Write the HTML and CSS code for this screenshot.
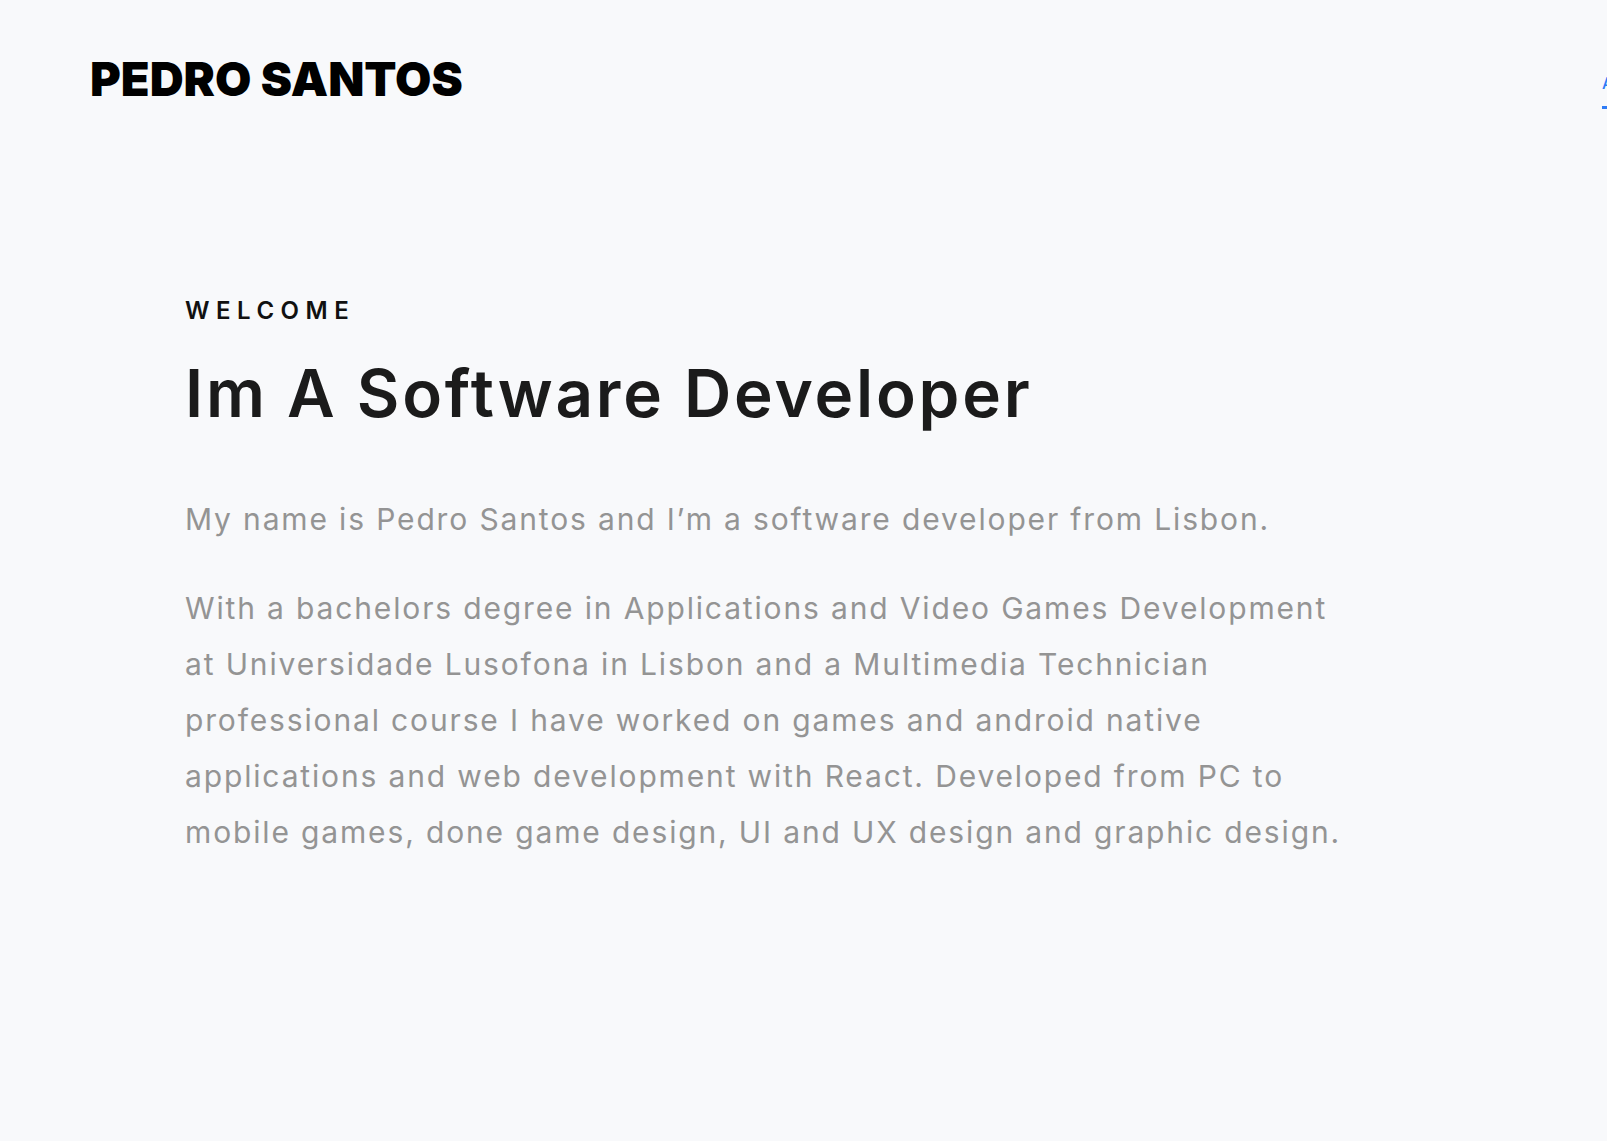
FILE: index.html
```html
<!DOCTYPE html>
<html lang="en">
<head>
<meta charset="utf-8">
<title>Pedro Santos</title>
<link rel="stylesheet" href="styles.css">
</head>
<body>
<header class="site-header">
  <a class="logo" href="#">PEDRO SANTOS</a>
  <nav class="nav">
    <a class="nav-link active" href="#">About</a>
    <a class="nav-link" href="#">Projects</a>
    <a class="nav-link" href="#">Contact</a>
  </nav>
</header>
<main class="hero">
  <p class="eyebrow">Welcome</p>
  <h1 class="title">Im A Software Developer</h1>
  <p class="lead">My name is Pedro Santos and I’m a software developer from Lisbon.</p>
  <p class="lead body">With a bachelors degree in Applications and Video Games Development at Universidade Lusofona in Lisbon and a Multimedia Technician professional course I have worked on games and android native applications and web development with React. Developed from PC to mobile games, done game design, UI and UX design and graphic design.</p>
</main>
</body>
</html>
```

FILE: styles.css
```css
html {
  overflow-x: hidden;
}
body {
  margin: 0;
  background: #f8f9fb;
  font-family: Inter, "Noto Sans", sans-serif;
  overflow-x: hidden;
}
.site-header {
  display: flex;
  align-items: flex-start;
  padding: 51px 0 0 90px;
  width: max-content;
}
.logo {
  flex: 0 0 1512px;
  font-size: 47px;
  line-height: 56px;
  font-weight: 900;
  color: #000;
  text-decoration: none;
  letter-spacing: 0;
}
.nav {
  display: flex;
  gap: 40px;
  padding-top: 20px;
}
.nav-link {
  font-size: 16px;
  line-height: 24px;
  font-weight: 500;
  color: #333;
  text-decoration: none;
  padding-bottom: 11px;
  border-bottom: 3px solid transparent;
}
.nav-link.active {
  color: #2f7cf6;
  border-bottom-color: #2f7cf6;
}
.hero {
  padding: 186px 0 0 185px;
  width: 1170px;
}
.eyebrow {
  margin: 0;
  font-size: 24px;
  line-height: 32px;
  font-weight: 600;
  letter-spacing: 6.5px;
  text-transform: uppercase;
  color: #111;
}
.title {
  margin: 28px 0 0;
  font-size: 65.5px;
  line-height: 1.2;
  font-weight: 600;
  letter-spacing: 2.8px;
  color: #1b1b1b;
}
.lead {
  margin: 57px 0 0;
  font-size: 30px;
  line-height: 56px;
  font-weight: 400;
  letter-spacing: 1.85px;
  color: #949494;
}
.lead.body {
  margin-top: 33px;
}
```
